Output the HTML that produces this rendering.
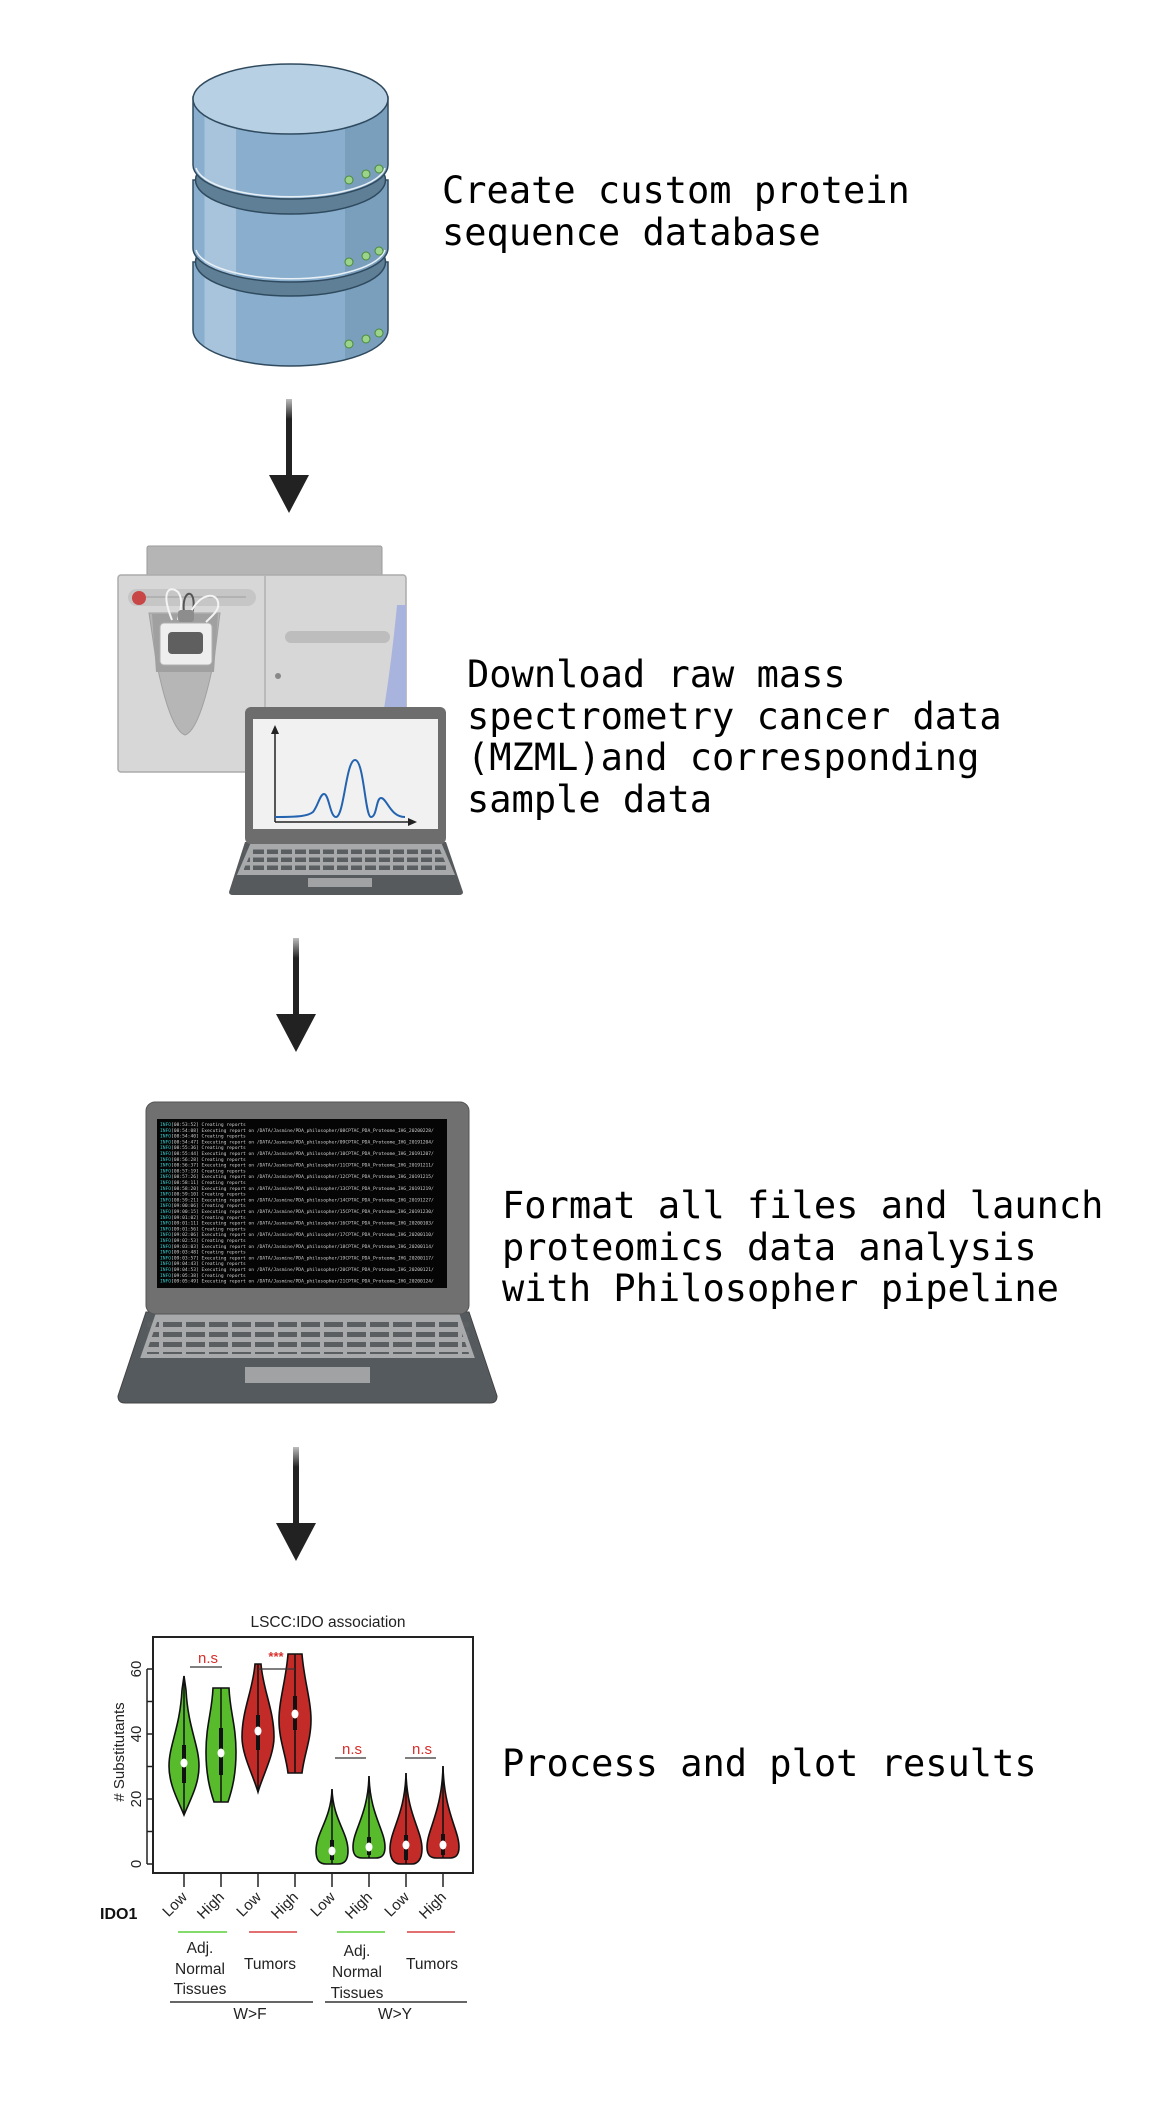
<!DOCTYPE html>
<html><head><meta charset="utf-8">
<style>
html,body{margin:0;padding:0;background:#fff;}
body{width:1167px;height:2102px;position:relative;overflow:hidden;}
.t{position:absolute;font-family:"DejaVu Sans Mono","Liberation Mono",monospace;font-size:37px;line-height:41.5px;color:#000;white-space:pre;}
svg{position:absolute;left:0;top:0;}
</style></head><body>
<svg width="1167" height="2102" viewBox="0 0 1167 2102" xmlns="http://www.w3.org/2000/svg">
<defs>
<linearGradient id="dbg" x1="0" x2="1" y1="0" y2="0">
<stop offset="0" stop-color="#89aece"/><stop offset="0.06" stop-color="#89aece"/>
<stop offset="0.06" stop-color="#a8c4dc"/><stop offset="0.22" stop-color="#a8c4dc"/>
<stop offset="0.22" stop-color="#89aece"/><stop offset="0.78" stop-color="#89aece"/>
<stop offset="0.78" stop-color="#7a9fbd"/><stop offset="1" stop-color="#7a9fbd"/>
</linearGradient>
<linearGradient id="shaft" x1="0" x2="0" y1="0" y2="1">
<stop offset="0" stop-color="#222" stop-opacity="0.3"/><stop offset="0.25" stop-color="#222"/>
</linearGradient>
<pattern id="keys" width="14" height="8" patternUnits="userSpaceOnUse">
<rect x="1" y="1.5" width="11" height="4.5" fill="#5b5e61"/>
</pattern>
<pattern id="keys2" width="23" height="10" patternUnits="userSpaceOnUse">
<rect x="2" y="2" width="19" height="5" fill="#5b5e61"/>
</pattern>
</defs>

<!-- Database -->
<g stroke="#2f4a5e" stroke-width="1.5">
<path d="M193,262 L193,330 A97.5,36 0 0 0 388,330 L388,262 Z" fill="url(#dbg)"/>
<ellipse cx="290.5" cy="262" rx="95" ry="34" fill="#5f7f96"/>
<path d="M193,180 L193,248 A97.5,34 0 0 0 388,248 L388,180 Z" fill="url(#dbg)"/>
<ellipse cx="290.5" cy="180" rx="95" ry="34" fill="#5f7f96"/>
<path d="M193,97 L193,165 A97.5,34 0 0 0 388,165 L388,97 Z" fill="url(#dbg)"/>
<ellipse cx="290.5" cy="99" rx="97.5" ry="35" fill="#b8d0e4"/>
</g>
<path d="M196,250 A95,32 0 0 0 385,250" fill="none" stroke="#e8f0f6" stroke-width="1.5"/>
<path d="M196,168 A95,32 0 0 0 385,168" fill="none" stroke="#e8f0f6" stroke-width="1.5"/>
<g fill="#9bd38a" stroke="#4a8a3a" stroke-width="1">
<circle cx="349" cy="180" r="4"/><circle cx="366" cy="174" r="4"/><circle cx="379" cy="169" r="4"/>
<circle cx="349" cy="262" r="4"/><circle cx="366" cy="256" r="4"/><circle cx="379" cy="251" r="4"/>
<circle cx="349" cy="344" r="4"/><circle cx="366" cy="339" r="4"/><circle cx="379" cy="333" r="4"/>
</g>

<!-- Arrows -->
<g>
<rect x="286" y="399" width="6" height="80" fill="url(#shaft)"/><path d="M269,475 L309,475 L289,513 Z" fill="#222"/>
<rect x="293" y="938" width="6" height="80" fill="url(#shaft)"/><path d="M276,1014 L316,1014 L296,1052 Z" fill="#222"/>
<rect x="293" y="1447" width="6" height="80" fill="url(#shaft)"/><path d="M276,1523 L316,1523 L296,1561 Z" fill="#222"/>
</g>

<!-- Mass spec instrument -->
<rect x="147" y="546" width="235" height="32" rx="2" fill="#b5b5b5" stroke="#9a9a9a"/>
<rect x="118" y="575" width="288" height="197" rx="3" fill="#d7d7d7" stroke="#ababab" stroke-width="1.5"/>
<path d="M397,605 L406,605 L406,772 L372,772 Q388,700 397,605 Z" fill="#a8b4de"/>
<line x1="265" y1="576" x2="265" y2="771" stroke="#b0b0b0" stroke-width="1.5"/>
<rect x="128" y="589" width="128" height="17" rx="8.5" fill="#c6c6c6"/>
<line x1="140" y1="597" x2="246" y2="597" stroke="#9e9e9e" stroke-width="1"/>
<circle cx="139" cy="598" r="7" fill="#c84646"/>
<path d="M149,613 L220,613 L214,660 Q200,730 185,735 Q170,730 156,660 Z" fill="#b6b6b6" stroke="#a0a0a0"/>
<path d="M152,614 L218,614 L214,672 L156,672 Z" fill="#a0a0a0"/>
<rect x="160" y="623" width="52" height="42" rx="4" fill="#eeeeee" stroke="#b0b0b0"/>
<rect x="168" y="632" width="35" height="22" rx="4" fill="#5f5f5f"/>
<path d="M172,620 C160,590 170,585 178,592 C184,600 180,612 178,620" fill="none" stroke="#f4f4f4" stroke-width="2"/>
<path d="M185,618 C180,596 190,588 193,598 C195,606 192,614 190,620" fill="none" stroke="#555" stroke-width="2"/>
<path d="M188,620 C195,595 215,590 218,602 C220,610 212,616 206,622" fill="none" stroke="#f4f4f4" stroke-width="2"/>
<rect x="178" y="610" width="16" height="12" rx="3" fill="#8d8d8d"/>
<rect x="285" y="631" width="105" height="12" rx="6" fill="#bdbdbd"/>
<circle cx="278" cy="676" r="3" fill="#888"/>

<!-- Laptop 1 -->
<path d="M245,842 L446,842 L463,892 Q463,895 459,895 L233,895 Q229,895 229,892 Z" fill="#575a5d"/>
<path d="M252,845 L440,845 L452,873 L240,873 Z" fill="#a7a9ab"/>
<rect x="244" y="847" width="205" height="25" fill="url(#keys)"/>
<path d="M252,845 L440,845 L452,873 L240,873 Z" fill="none" stroke="#a7a9ab" stroke-width="4"/>
<rect x="308" y="878" width="64" height="9" fill="#a0a2a4"/>
<rect x="245" y="707" width="201" height="137" rx="6" fill="#6d6d6d"/>
<rect x="253" y="719" width="185" height="110" fill="#f1f1f1"/>
<path d="M275,822 L275,732" stroke="#222" stroke-width="1.5"/>
<path d="M271,734 L275,725 L279,734 Z" fill="#222"/>
<path d="M275,822 L410,822" stroke="#222" stroke-width="1.5"/>
<path d="M408,818 L417,822 L408,826 Z" fill="#222"/>
<path d="M275,817 C300,817 308,816 313,812 C318,806 320,794 324,794 C329,794 330,817 336,817 C344,817 346,760 355,760 C364,760 365,817 371,817 C377,817 376,798 381,798 C387,798 390,817 405,817" fill="none" stroke="#2463b0" stroke-width="2"/>

<!-- Laptop 2 -->
<path d="M146,1312 L469,1312 L497,1396 Q497,1403 490,1403 L125,1403 Q118,1403 118,1396 Z" fill="#555a5e" stroke="#444" stroke-width="1"/>
<path d="M157,1316 L458,1316 L472,1356 L143,1356 Z" fill="#a7a9ab"/>
<rect x="147" y="1318" width="322" height="36" fill="url(#keys2)"/>
<path d="M157,1316 L458,1316 L472,1356 L143,1356 Z" fill="none" stroke="#a7a9ab" stroke-width="4"/>
<rect x="245" y="1367" width="125" height="16" fill="#a0a2a4"/>
<rect x="146" y="1102" width="323" height="212" rx="9" fill="#707070" stroke="#555" stroke-width="1"/>
<rect x="157" y="1119" width="290" height="169" fill="#050505"/>
<g font-family="DejaVu Sans Mono, monospace" font-size="4.6" fill="#d0d0d0">
<text x="160" y="1126"><tspan fill="#3cc">INFO</tspan>[08:53:52] Creating reports</text>
<text x="160" y="1131.8"><tspan fill="#3cc">INFO</tspan>[08:54:08] Executing report on /DATA/Jasmine/PDA_philosopher/08CPTAC_PDA_Proteome_IHG_20200228/</text>
<text x="160" y="1137.6"><tspan fill="#3cc">INFO</tspan>[08:54:40] Creating reports</text>
<text x="160" y="1143.4"><tspan fill="#3cc">INFO</tspan>[08:54:47] Executing report on /DATA/Jasmine/PDA_philosopher/09CPTAC_PDA_Proteome_IHG_20191204/</text>
<text x="160" y="1149.2"><tspan fill="#3cc">INFO</tspan>[08:55:36] Creating reports</text>
<text x="160" y="1155"><tspan fill="#3cc">INFO</tspan>[08:55:44] Executing report on /DATA/Jasmine/PDA_philosopher/10CPTAC_PDA_Proteome_IHG_20191207/</text>
<text x="160" y="1160.8"><tspan fill="#3cc">INFO</tspan>[08:56:28] Creating reports</text>
<text x="160" y="1166.6"><tspan fill="#3cc">INFO</tspan>[08:56:37] Executing report on /DATA/Jasmine/PDA_philosopher/11CPTAC_PDA_Proteome_IHG_20191211/</text>
<text x="160" y="1172.4"><tspan fill="#3cc">INFO</tspan>[08:57:19] Creating reports</text>
<text x="160" y="1178.2"><tspan fill="#3cc">INFO</tspan>[08:57:26] Executing report on /DATA/Jasmine/PDA_philosopher/12CPTAC_PDA_Proteome_IHG_20191215/</text>
<text x="160" y="1184"><tspan fill="#3cc">INFO</tspan>[08:58:11] Creating reports</text>
<text x="160" y="1189.8"><tspan fill="#3cc">INFO</tspan>[08:58:20] Executing report on /DATA/Jasmine/PDA_philosopher/13CPTAC_PDA_Proteome_IHG_20191219/</text>
<text x="160" y="1195.6"><tspan fill="#3cc">INFO</tspan>[08:59:10] Creating reports</text>
<text x="160" y="1201.4"><tspan fill="#3cc">INFO</tspan>[08:59:21] Executing report on /DATA/Jasmine/PDA_philosopher/14CPTAC_PDA_Proteome_IHG_20191227/</text>
<text x="160" y="1207.2"><tspan fill="#3cc">INFO</tspan>[09:00:06] Creating reports</text>
<text x="160" y="1213"><tspan fill="#3cc">INFO</tspan>[09:00:15] Executing report on /DATA/Jasmine/PDA_philosopher/15CPTAC_PDA_Proteome_IHG_20191230/</text>
<text x="160" y="1218.8"><tspan fill="#3cc">INFO</tspan>[09:01:02] Creating reports</text>
<text x="160" y="1224.6"><tspan fill="#3cc">INFO</tspan>[09:01:11] Executing report on /DATA/Jasmine/PDA_philosopher/16CPTAC_PDA_Proteome_IHG_20200103/</text>
<text x="160" y="1230.4"><tspan fill="#3cc">INFO</tspan>[09:01:56] Creating reports</text>
<text x="160" y="1236.2"><tspan fill="#3cc">INFO</tspan>[09:02:06] Executing report on /DATA/Jasmine/PDA_philosopher/17CPTAC_PDA_Proteome_IHG_20200110/</text>
<text x="160" y="1242"><tspan fill="#3cc">INFO</tspan>[09:02:53] Creating reports</text>
<text x="160" y="1247.8"><tspan fill="#3cc">INFO</tspan>[09:03:03] Executing report on /DATA/Jasmine/PDA_philosopher/18CPTAC_PDA_Proteome_IHG_20200114/</text>
<text x="160" y="1253.6"><tspan fill="#3cc">INFO</tspan>[09:03:48] Creating reports</text>
<text x="160" y="1259.4"><tspan fill="#3cc">INFO</tspan>[09:03:57] Executing report on /DATA/Jasmine/PDA_philosopher/19CPTAC_PDA_Proteome_IHG_20200117/</text>
<text x="160" y="1265.2"><tspan fill="#3cc">INFO</tspan>[09:04:43] Creating reports</text>
<text x="160" y="1271"><tspan fill="#3cc">INFO</tspan>[09:04:53] Executing report on /DATA/Jasmine/PDA_philosopher/20CPTAC_PDA_Proteome_IHG_20200121/</text>
<text x="160" y="1276.8"><tspan fill="#3cc">INFO</tspan>[09:05:38] Creating reports</text>
<text x="160" y="1282.6"><tspan fill="#3cc">INFO</tspan>[09:05:49] Executing report on /DATA/Jasmine/PDA_philosopher/21CPTAC_PDA_Proteome_IHG_20200124/</text>
</g>

<!-- Plot -->
<g font-family="Liberation Sans, sans-serif">
<text x="328" y="1627" font-size="15.5" text-anchor="middle" fill="#222">LSCC:IDO association</text>
<rect x="153" y="1637" width="320" height="236" fill="none" stroke="#222" stroke-width="2"/>
<g stroke="#222" stroke-width="1.5">
<line x1="147" y1="1669" x2="153" y2="1669"/><line x1="147" y1="1701.5" x2="153" y2="1701.5"/>
<line x1="147" y1="1734" x2="153" y2="1734"/><line x1="147" y1="1766.5" x2="153" y2="1766.5"/>
<line x1="147" y1="1799" x2="153" y2="1799"/><line x1="147" y1="1831.5" x2="153" y2="1831.5"/>
<line x1="147" y1="1864" x2="153" y2="1864"/><line x1="147" y1="1669" x2="147" y2="1864"/>
</g>
<g font-size="15" fill="#222" text-anchor="middle">
<text transform="translate(141,1864) rotate(-90)">0</text>
<text transform="translate(141,1799) rotate(-90)">20</text>
<text transform="translate(141,1734) rotate(-90)">40</text>
<text transform="translate(141,1669) rotate(-90)">60</text>
<text transform="translate(124,1752) rotate(-90)"># Substitutants</text>
</g>
<g stroke="#111" stroke-width="1.6">
<path d="M184,1815 C190,1800 199,1785 199,1766 C199,1745 188,1728 186,1690 L184,1676 L182,1690 C180,1728 169,1745 169,1766 C169,1785 178,1800 184,1815 Z" fill="#58bb2c"/>
<path d="M214,1802 L228,1802 C232,1790 236,1775 236,1752 C236,1725 230,1712 229,1688 L213,1688 C212,1712 206,1725 206,1752 C206,1775 210,1790 214,1802 Z" fill="#58bb2c"/>
<path d="M258,1792 C263,1775 274,1755 274,1737 C274,1710 263,1690 261,1664 L255,1664 C253,1690 242,1710 242,1737 C242,1755 253,1775 258,1792 Z" fill="#c22b27"/>
<path d="M288,1773 L302,1773 C304,1755 311,1740 311,1720 C311,1700 304,1680 302,1654 L288,1654 C286,1680 279,1700 279,1720 C279,1740 286,1755 288,1773 Z" fill="#c22b27"/>
<path d="M332,1789 C333,1820 348,1832 348,1851 C348,1862 343,1864 338,1864 L326,1864 C321,1864 316,1862 316,1851 C316,1832 331,1820 332,1789 Z" fill="#58bb2c"/>
<path d="M369,1776 C370,1815 385,1830 385,1847 C385,1856 381,1858 376,1858 L362,1858 C357,1858 353,1856 353,1847 C353,1830 368,1815 369,1776 Z" fill="#58bb2c"/>
<path d="M406,1773 C407,1815 422,1830 422,1849 C422,1860 417,1864 412,1864 L400,1864 C395,1864 390,1860 390,1849 C390,1830 405,1815 406,1773 Z" fill="#c22b27"/>
<path d="M443,1766 C444,1812 459,1830 459,1847 C459,1856 455,1858 450,1858 L436,1858 C431,1858 427,1856 427,1847 C427,1830 442,1812 443,1766 Z" fill="#c22b27"/>
</g>
<g stroke="#111" stroke-width="1.5">
<line x1="184" y1="1676" x2="184" y2="1815"/><line x1="221" y1="1688" x2="221" y2="1802"/>
<line x1="258" y1="1664" x2="258" y2="1792"/><line x1="295" y1="1654" x2="295" y2="1773"/>
<line x1="332" y1="1789" x2="332" y2="1864"/><line x1="369" y1="1776" x2="369" y2="1858"/>
<line x1="406" y1="1773" x2="406" y2="1864"/><line x1="443" y1="1766" x2="443" y2="1858"/>
</g>
<g stroke="#111" stroke-width="4">
<line x1="184" y1="1745" x2="184" y2="1783"/><line x1="221" y1="1728" x2="221" y2="1775"/>
<line x1="258" y1="1715" x2="258" y2="1750"/><line x1="295" y1="1696" x2="295" y2="1730"/>
<line x1="332" y1="1840" x2="332" y2="1860"/><line x1="369" y1="1837" x2="369" y2="1855"/>
<line x1="406" y1="1835" x2="406" y2="1860"/><line x1="443" y1="1834" x2="443" y2="1855"/>
</g>
<g fill="#fff">
<ellipse cx="184" cy="1763" rx="3.5" ry="4.5"/><ellipse cx="221" cy="1753" rx="3.5" ry="4.5"/>
<ellipse cx="258" cy="1731" rx="3.5" ry="4.5"/><ellipse cx="295" cy="1714" rx="3.5" ry="4.5"/>
<ellipse cx="332" cy="1851" rx="3.5" ry="4.5"/><ellipse cx="369" cy="1847" rx="3.5" ry="4.5"/>
<ellipse cx="406" cy="1845" rx="3.5" ry="4.5"/><ellipse cx="443" cy="1845" rx="3.5" ry="4.5"/>
</g>
<g stroke="#333" stroke-width="1.2">
<line x1="190" y1="1667" x2="222" y2="1667"/><line x1="258" y1="1669" x2="295" y2="1669"/>
<line x1="335" y1="1758" x2="366" y2="1758"/><line x1="405" y1="1758" x2="436" y2="1758"/>
</g>
<g fill="#d8302c" font-size="15" text-anchor="middle">
<text x="208" y="1663">n.s</text><text x="352" y="1754">n.s</text><text x="422" y="1754">n.s</text>
<text x="276" y="1661" font-size="13" font-weight="bold">***</text>
</g>
<g stroke="#222" stroke-width="1.5">
<line x1="184" y1="1873" x2="184" y2="1887"/><line x1="221" y1="1873" x2="221" y2="1887"/>
<line x1="258" y1="1873" x2="258" y2="1887"/><line x1="295" y1="1873" x2="295" y2="1887"/>
<line x1="332" y1="1873" x2="332" y2="1887"/><line x1="369" y1="1873" x2="369" y2="1887"/>
<line x1="406" y1="1873" x2="406" y2="1887"/><line x1="443" y1="1873" x2="443" y2="1887"/>
</g>
<g font-size="15" fill="#222" text-anchor="end">
<text transform="translate(188,1898) rotate(-45)">Low</text>
<text transform="translate(225,1898) rotate(-45)">High</text>
<text transform="translate(262,1898) rotate(-45)">Low</text>
<text transform="translate(299,1898) rotate(-45)">High</text>
<text transform="translate(336,1898) rotate(-45)">Low</text>
<text transform="translate(373,1898) rotate(-45)">High</text>
<text transform="translate(410,1898) rotate(-45)">Low</text>
<text transform="translate(447,1898) rotate(-45)">High</text>
</g>
<text x="100" y="1919" font-size="16" font-weight="bold" fill="#111">IDO1</text>
<line x1="178" y1="1932" x2="227" y2="1932" stroke="#5ccf3a" stroke-width="1.5"/>
<line x1="249" y1="1932" x2="297" y2="1932" stroke="#d84040" stroke-width="1.5"/>
<line x1="337" y1="1932" x2="385" y2="1932" stroke="#5ccf3a" stroke-width="1.5"/>
<line x1="407" y1="1932" x2="455" y2="1932" stroke="#d84040" stroke-width="1.5"/>
<g font-size="15.5" fill="#222" text-anchor="middle">
<text x="200" y="1953">Adj.</text><text x="200" y="1974">Normal</text><text x="200" y="1994">Tissues</text>
<text x="270" y="1969">Tumors</text>
<text x="357" y="1956">Adj.</text><text x="357" y="1977">Normal</text><text x="357" y="1998">Tissues</text>
<text x="432" y="1969">Tumors</text>
<text x="250" y="2019">W&gt;F</text><text x="395" y="2019">W&gt;Y</text>
</g>
<line x1="170" y1="2002" x2="313" y2="2002" stroke="#333" stroke-width="1.5"/>
<line x1="325" y1="2002" x2="467" y2="2002" stroke="#333" stroke-width="1.5"/>
</g>
</svg>

<div class="t" style="left:442px;top:170px;">Create custom protein
sequence database</div>
<div class="t" style="left:467px;top:654px;">Download raw mass
spectrometry cancer data
(MZML)and corresponding
sample data</div>
<div class="t" style="left:502px;top:1185px;">Format all files and launch
proteomics data analysis
with Philosopher pipeline</div>
<div class="t" style="left:502px;top:1743px;">Process and plot results</div>
</body></html>
